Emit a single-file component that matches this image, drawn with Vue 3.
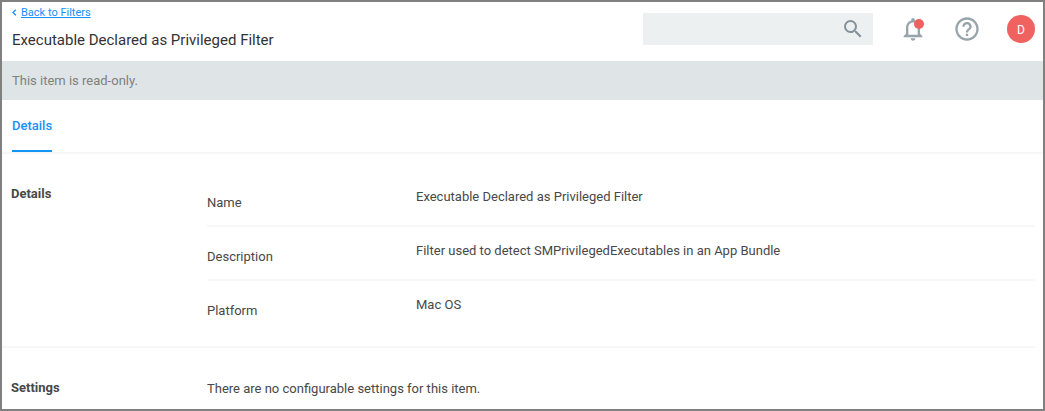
<script setup>
const fields = [
  { label: 'Name', value: 'Executable Declared as Privileged Filter' },
  { label: 'Description', value: 'Filter used to detect SMPrivilegedExecutables in an App Bundle' },
  { label: 'Platform', value: 'Mac OS' },
]
</script>

<template>
  <div class="page">
    <header class="header">
      <div class="titles">
        <a class="back">
          <svg class="chevron" width="5" height="7" viewBox="0 0 5 7"><path d="M3.800 .7 1 3.500 3.800 6.300" /></svg>
          <span class="back-text">Back to Filters</span>
        </a>
        <h1 class="title">Executable Declared as Privileged Filter</h1>
      </div>
      <div class="search">
        <svg width="24" height="24" viewBox="0 0 24 24"><path d="M15.5 14h-.79l-.28-.27A6.471 6.471 0 0 0 16 9.5 6.5 6.5 0 1 0 9.5 16c1.61 0 3.09-.59 4.23-1.57l.27.28v.79l5 4.99L20.49 19l-4.99-5zm-6 0C7.01 14 5 11.99 5 9.5S7.01 5 9.5 5 14 7.01 14 9.5 11.99 14 9.5 14z" /></svg>
      </div>
      <div class="bell">
        <svg width="28" height="28" viewBox="0 0 24 24"><path d="M12 22c1.1 0 2-.9 2-2h-4c0 1.1.9 2 2 2zm6-6v-5c0-3.07-1.63-5.64-4.5-6.32V4c0-.83-.67-1.5-1.5-1.5s-1.5.67-1.5 1.5v.68C7.64 5.36 6 7.92 6 11v5l-2 2v1h16v-1l-2-2zm-2 1H8v-6c0-2.48 1.51-4.5 4-4.5s4 2.02 4 4.5v6z" /></svg>
        <span class="dot"></span>
      </div>
      <svg class="help" width="28" height="28" viewBox="0 0 24 24"><path d="M11 18h2v-2h-2v2zm1-16C6.48 2 2 6.48 2 12s4.48 10 10 10 10-4.48 10-10S17.52 2 12 2zm0 18c-4.41 0-8-3.59-8-8s3.59-8 8-8 8 3.59 8 8-3.59 8-8 8zm0-14c-2.21 0-4 1.79-4 4h2c0-1.1.9-2 2-2s2 .9 2 2c0 2-3 1.75-3 5h2c0-2.25 3-2.5 3-5 0-2.21-1.79-4-4-4z" /></svg>
      <div class="avatar">D</div>
    </header>

    <div class="banner">This item is read-only.</div>

    <nav class="tabs"><a class="tab">Details</a></nav>

    <section class="section details">
      <h2 class="heading">Details</h2>
      <div class="fields">
        <div v-for="field in fields" :key="field.label" class="field">
          <span class="label">{{ field.label }}</span>
          <span class="value">{{ field.value }}</span>
        </div>
      </div>
    </section>

    <section class="section settings">
      <h2 class="heading">Settings</h2>
      <p class="empty">There are no configurable settings for this item.</p>
    </section>
  </div>
</template>

<style>
body { margin: 0; }
</style>

<style scoped>
.page {
  box-sizing: border-box;
  width: 1045px;
  height: 411px;
  border: 2px solid #808080;
  overflow: hidden;
  background: #fff;
  color: #484848;
  font: 13px/16px Roboto, "Liberation Sans", sans-serif;
}
.header { display: flex; height: 59px; padding: 0 8px 0 10px; box-sizing: border-box; }
.titles { flex: 1; }
.back { display: flex; align-items: center; height: 14px; margin-top: 4px; color: #1890f8; font-size: 11px; line-height: 14px; }
.back-text { text-decoration: underline; }
.chevron { margin: -1px 4px 0 0; fill: none; stroke: #1890f8; stroke-width: 1.3; }
.title { margin: 10px 0 0; color: #333; font-size: 15px; line-height: 20px; font-weight: 400; }
.search { display: flex; justify-content: flex-end; align-items: flex-start; box-sizing: border-box; width: 230px; height: 32px; margin-top: 11px; padding: 4px 8px 0 0; background: #ecf0f1; }
.search svg { fill: #84919b; }
.bell { position: relative; width: 28px; height: 28px; margin: 13px 0 0 26px; }
.bell svg, .help { display: block; fill: #98a4ac; }
.dot { position: absolute; left: 15px; top: 4px; width: 10px; height: 10px; border-radius: 50%; background: #f0625f; }
.help { margin: 13px 0 0 26px; }
.avatar { width: 28px; height: 28px; margin: 13px 0 0 26px; border-radius: 50%; background: #f0625f; color: #fff; font-size: 12px; line-height: 30px; font-weight: 400; text-align: center; }
.banner { height: 39px; padding-left: 10px; background: #dfe4e6; color: #808080; line-height: 39px; }
.tabs { display: flex; height: 52px; padding-left: 10px; border-bottom: 2px solid #f7f7f7; }
.tab { box-sizing: border-box; height: 52px; padding-bottom: 0; border-bottom: 2px solid #1494f4; color: #1890f8; font-weight: 500; line-height: 51px; }
.section { display: flex; padding-left: 9px; }
.heading { width: 196px; margin: 0; font-size: 13px; line-height: 16px; font-weight: 700; }
.details { box-sizing: border-box; height: 194px; margin-right: 8px; border-bottom: 2px solid #f7f7f7; }
.details .heading { padding-top: 32px; }
.fields { flex: 1; padding-top: 19px; }
.field { display: flex; box-sizing: border-box; height: 54px; border-bottom: 2px solid #f7f7f7; }
.field:last-child { border-bottom: 0; }
.label { width: 209px; padding-top: 22px; }
.value { padding-top: 16px; }
.settings { padding-top: 32px; }
.empty { margin: 1px 0 0; }
</style>
